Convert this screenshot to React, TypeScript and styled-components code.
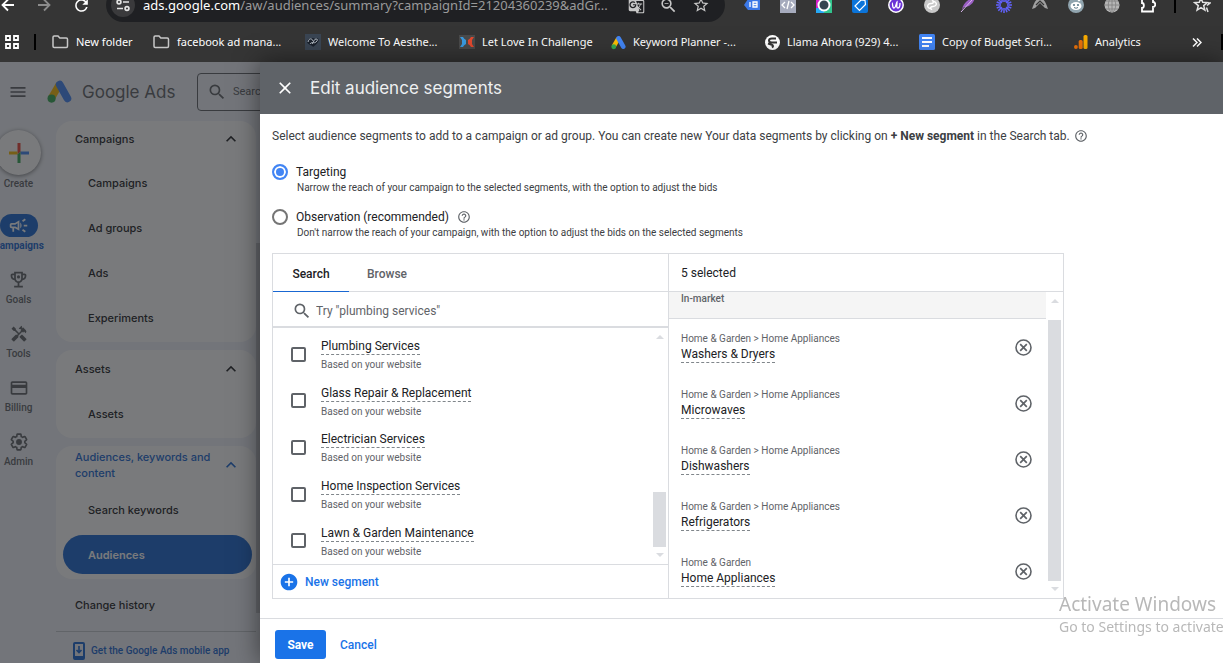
import React from "react";
import styled, { createGlobalStyle } from "styled-components";
import {
  MdMenu,
  MdSearch,
  MdClose,
  MdExpandLess,
  MdOutlineCampaign,
  MdHandyman,
  MdCreditCard,
  MdHelpOutline,
  MdAddCircle,
  MdRefresh,
  MdStarBorder,
  MdZoomOut,
  MdGTranslate,
} from "react-icons/md";

const body = `Roboto, "Liberation Sans", sans-serif`;
const display = `Inter, Roboto, sans-serif`;
const system = `"Noto Sans", "Open Sans", sans-serif`;

const GlobalStyle = createGlobalStyle`
  *, *::before, *::after { box-sizing: border-box; }
  body { margin: 0; background: #fff; overflow: hidden; font-family: ${body}; }
  button, input { font: inherit; color: inherit; }
  button { background: none; border: 0; padding: 0; cursor: pointer; }
  a { color: inherit; text-decoration: none; }
  p, h1, h2, ul { margin: 0; padding: 0; font-weight: 400; }
  ul { list-style: none; }
  svg { display: block; flex: none; }
`;

const Page = styled.div`
  display: flex;
  flex-direction: column;
  height: 100vh;
  overflow: hidden;
`;

/* ---------- browser frame ---------- */

const BrowserBar = styled.header`
  flex: none;
  height: 22px;
  display: flex;
  align-items: flex-end;
  overflow: hidden;
  background: #353535;
  color: #e3e3e3;
  font-family: ${system};
`;

const BarRow = styled.div`
  flex: 1;
  min-width: 0;
  height: 34px;
  display: flex;
  align-items: center;
`;

const NavButtons = styled.div`
  width: 106px;
  flex: none;
  display: flex;
  align-items: center;
  gap: 20px;
`;

const IconButton = styled.button<{ $color?: string }>`
  display: flex;
  align-items: center;
  justify-content: center;
  color: ${(p) => p.$color ?? "inherit"};
`;

const AddressPill = styled.div`
  flex: 1;
  min-width: 0;
  height: 34px;
  border-radius: 17px;
  background: #1f2023;
  display: flex;
  align-items: center;
  padding: 0 15px 0 5px;
  gap: 8px;
`;

const SiteInfo = styled.button`
  width: 24px;
  height: 24px;
  border-radius: 50%;
  background: #3a3a3c;
  display: grid;
  place-items: center;
  flex: none;
`;

const Address = styled.div`
  flex: 1;
  min-width: 0;
  font-size: 13px;
  line-height: 20px;
  color: #9a9a9a;
  white-space: nowrap;
  overflow: hidden;
  b {
    font-weight: 400;
    color: #fff;
  }
`;

const PillActions = styled.div`
  display: flex;
  align-items: center;
  gap: 14px;
  color: #c7c7c7;
`;

const Extensions = styled.div`
  width: 498px;
  flex: none;
  display: flex;
  align-items: center;
  padding-left: 9px;
`;

const ExtCell = styled.button`
  width: 36px;
  display: grid;
  place-items: center;
`;

const BarRule = styled.span<{ $gap?: number }>`
  width: 2px;
  height: 16px;
  margin: 0 ${(p) => p.$gap ?? 0}px;
  background: #000;
  flex: none;
`;

const BookmarkBar = styled.nav`
  flex: none;
  height: 40px;
  display: flex;
  align-items: center;
  overflow: hidden;
  background: #353535;
  color: #fff;
  font-family: ${system};
  font-size: 11px;
  line-height: 16px;
`;

const AppsButton = styled(IconButton)`
  width: 34px;
  padding-right: 10px;
`;

const BookmarkList = styled.div`
  flex: 1;
  min-width: 0;
  display: flex;
  padding-left: 16px;
  overflow: hidden;
`;

const Bookmark = styled.a<{ $width: number }>`
  width: ${(p) => p.$width}px;
  flex: none;
  display: flex;
  align-items: center;
  gap: 7px;
  white-space: nowrap;
`;

const OverflowButton = styled(IconButton)`
  width: 30px;
  margin-right: 9px;
`;

/* ---------- dimmed application ---------- */

const Workspace = styled.div`
  flex: 1;
  min-height: 0;
  display: flex;
`;

const AppPane = styled.div`
  position: relative;
  flex: 0 0 260px;
  overflow: hidden;
  display: flex;
  flex-direction: column;
  background: #f0f3f9;
  color: #3c4043;
  &::after {
    content: "";
    position: absolute;
    inset: 0;
    background: rgba(32, 33, 36, 0.6);
  }
`;

const AppHeader = styled.div`
  flex: none;
  height: 59px;
  display: flex;
  align-items: center;
  padding-left: 8px;
  color: #5f6368;
`;

const Brand = styled.a`
  display: flex;
  align-items: center;
  gap: 10px;
  width: 149px;
  padding-left: 19px;
  flex: none;
  font-family: ${display};
  font-size: 17px;
  line-height: 24px;
  white-space: nowrap;
`;

const AppSearch = styled.label`
  flex: none;
  width: 320px;
  height: 38px;
  margin-left: 20px;
  display: flex;
  align-items: center;
  gap: 6px;
  padding-left: 9px;
  border: 1px solid #5f6368;
  border-radius: 4px;
  input {
    border: 0;
    outline: 0;
    padding: 0;
    background: none;
    font-size: 11px;
  }
  input::placeholder {
    color: #5f6368;
  }
`;

const AppBody = styled.div`
  flex: 1;
  display: flex;
  min-height: 0;
`;

const Rail = styled.nav`
  width: 37px;
  flex: none;
  display: flex;
  flex-direction: column;
  align-items: center;
  padding-top: 9px;
  color: #5f6368;
  font-size: 10px;
  font-weight: 500;
  line-height: 16px;
`;

const CreateButton = styled.button`
  display: flex;
  flex-direction: column;
  align-items: center;
  height: 84px;
  span {
    width: 45px;
    height: 45px;
    border-radius: 50%;
    background: #fff;
    box-shadow: 0 1px 4px rgba(0, 0, 0, 0.5);
    display: grid;
    place-items: center;
    margin-bottom: 1px;
  }
`;

const RailLink = styled.a<{ $active?: boolean }>`
  display: flex;
  flex-direction: column;
  align-items: center;
  gap: 1px;
  height: 54px;
  color: ${(p) => (p.$active ? "#1967d2" : "inherit")};
  font-weight: ${(p) => (p.$active ? 700 : 500)};
  span {
    width: 38px;
    height: 23px;
    border-radius: 12px;
    display: grid;
    place-items: center;
    background: ${(p) => (p.$active ? "#1967d2" : "transparent")};
    color: ${(p) => (p.$active ? "#fff" : "inherit")};
  }
`;

const SideNav = styled.nav`
  width: 200px;
  flex: none;
  margin-left: 19px;
  display: flex;
  flex-direction: column;
  gap: 8px;
  font-family: ${display};
  font-size: 11px;
  font-weight: 500;
  line-height: 16px;
`;

const NavCard = styled.section`
  flex: none;
  background: #fff;
  border-radius: 16px;
  padding-bottom: 5px;
`;

const CardHeading = styled.button<{ $active?: boolean; $height?: number }>`
  width: 100%;
  height: ${(p) => p.$height ?? 38}px;
  display: flex;
  align-items: center;
  justify-content: space-between;
  padding: 0 15px 0 19px;
  text-align: left;
  color: ${(p) => (p.$active ? "#1967d2" : "#202124")};
`;

const NavLink = styled.a<{ $active?: boolean }>`
  display: flex;
  align-items: center;
  height: 39px;
  margin: 6px 4px 0 7px;
  padding-left: 25px;
  border-radius: 20px;
  background: ${(p) => (p.$active ? "#1967d2" : "transparent")};
  color: ${(p) => (p.$active ? "#fff" : "#202124")};
  font-weight: ${(p) => (p.$active ? 600 : 500)};
`;

const HistoryLink = styled.a`
  flex: none;
  padding: 10px 19px;
  color: #202124;
`;

const MobileLink = styled.a`
  flex: none;
  display: flex;
  align-items: center;
  gap: 6px;
  height: 38px;
  padding-left: 17px;
  border-top: 1px solid #c4c7cc;
  color: #1967d2;
  font-family: ${body};
  font-size: 10px;
  font-weight: 500;
  white-space: nowrap;
`;

const NavThumb = styled.span`
  width: 4px;
  height: 370px;
  margin-top: 122px;
  background: #c9cbd2;
`;

/* ---------- dialog ---------- */

const Dialog = styled.main`
  position: relative;
  flex: 1;
  min-width: 0;
  display: flex;
  flex-direction: column;
  background: #fff;
  color: #3c4043;
  box-shadow: 0 0 24px rgba(0, 0, 0, 0.5);
`;

const DialogHeader = styled.header`
  flex: none;
  height: 52px;
  display: flex;
  align-items: center;
  gap: 15px;
  padding-left: 15px;
  background: #5f6368;
  color: #fff;
  h1 {
    font-family: ${display};
    font-size: 17px;
    line-height: 24px;
    color: #eef0f1;
  }
`;

const DialogBody = styled.div`
  flex: 1;
  min-height: 0;
  padding: 14px 12px 0;
`;

const Intro = styled.p`
  display: flex;
  align-items: center;
  gap: 4px;
  margin-bottom: 20px;
  font-size: 12px;
  line-height: 16px;
  b {
    font-weight: 700;
  }
`;

const HelpIcon = styled(MdHelpOutline)`
  color: #5f6368;
`;

const Option = styled.div`
  display: grid;
  grid-template-columns: 16px auto 1fr;
  column-gap: 8px;
  align-items: center;
  align-content: start;
  height: 45px;
  font-size: 12px;
  line-height: 16px;
  & + & {
    height: 44px;
  }
  label {
    color: #202124;
  }
  p {
    grid-column: 2 / 4;
    font-size: 10px;
    padding-left: 1px;
  }
`;

const Radio = styled.input`
  appearance: none;
  width: 16px;
  height: 16px;
  margin: 0;
  border: 2px solid #757575;
  border-radius: 50%;
  &:checked {
    border-color: #4285f4;
    background: #4285f4;
    box-shadow: inset 0 0 0 2px #fff;
  }
`;

const Picker = styled.section`
  display: grid;
  grid-template-columns: 1fr 1fr;
  max-width: 792px;
  height: 346px;
  border: 1px solid #dadce0;
`;

const Column = styled.div`
  min-width: 0;
  min-height: 0;
  display: flex;
  flex-direction: column;
  & + & {
    border-left: 1px solid #dadce0;
  }
`;

const ColumnHead = styled.div`
  flex: none;
  height: 38px;
  display: flex;
  align-items: center;
  border-bottom: 1px solid #dadce0;
  font-size: 12px;
  line-height: 16px;
`;

const Tab = styled.button<{ $active?: boolean }>`
  height: 38px;
  width: 76px;
  padding-top: 3px;
  font-size: 12px;
  font-weight: 500;
  color: ${(p) => (p.$active ? "#202124" : "#5f6368")};
  border-bottom: 1px solid ${(p) => (p.$active ? "#1967d2" : "transparent")};
`;

const SelectedCount = styled.h2`
  padding-left: 12px;
  font-size: 12px;
  color: #202124;
`;

const SearchField = styled.label`
  flex: none;
  height: 36px;
  display: flex;
  align-items: center;
  gap: 4px;
  padding: 4px 0 0 19px;
  border-bottom: 2px solid #dadce0;
  color: #5f6368;
  input {
    flex: 1;
    border: 0;
    outline: 0;
    padding: 0;
    font-size: 12px;
  }
  input::placeholder {
    color: #5f6368;
  }
`;

const ScrollArea = styled.div`
  flex: 1;
  min-height: 0;
  display: flex;
`;

const SegmentList = styled.ul`
  flex: 1;
  display: flex;
  flex-direction: column;
  padding-top: 3px;
`;

const SegmentRow = styled.li`
  flex: 1;
  display: flex;
  align-items: center;
  gap: 15px;
  padding-left: 18px;
  font-size: 10px;
  line-height: 16px;
  color: #5f6368;
`;

const Checkbox = styled.input`
  appearance: none;
  width: 15px;
  height: 15px;
  margin: 0;
  border: 2px solid #5f6368;
  border-radius: 2px;
`;

const SegmentText = styled.div`
  display: flex;
  flex-direction: column;
  align-items: flex-start;
  gap: 2px;
  padding-top: 4px;
`;

const SegmentName = styled.label`
  font-size: 12px;
  line-height: 15px;
  color: #202124;
  border-bottom: 1px dashed #80868b;
`;

const Scrollbar = styled.div`
  width: 17px;
  flex: none;
  display: flex;
  flex-direction: column;
  align-items: center;
  padding: 7px 2px;
`;

const Arrow = styled.span<{ $down?: boolean }>`
  border: 4px solid transparent;
  border-top: ${(p) => (p.$down ? "4px solid #dadce0" : "0")};
  border-bottom: ${(p) => (p.$down ? "0" : "4px solid #dadce0")};
`;

const Thumb = styled.span<{ $height?: number }>`
  width: 13px;
  margin: auto 0 6px;
  background: #dadce0;
  ${(p) => (p.$height ? `height: ${p.$height}px;` : "flex: 1; margin-top: 17px;")}
`;

const NewSegment = styled.button`
  flex: none;
  height: 34px;
  width: 100%;
  display: flex;
  align-items: center;
  gap: 6px;
  padding-left: 6px;
  border-top: 1px solid #dadce0;
  font-size: 12px;
  font-weight: 500;
  color: #1a73e8;
`;

const SelectedList = styled.ul`
  flex: 1;
  min-width: 0;
`;

const GroupTitle = styled.li`
  height: 27px;
  padding-left: 12px;
  background: #f5f5f5;
  border-bottom: 1px solid #dadce0;
  font-size: 10px;
  font-weight: 500;
  line-height: 14px;
  color: #5f6368;
`;

const SelectedRow = styled.li`
  height: 56px;
  display: flex;
  align-items: center;
  justify-content: space-between;
  padding: 0 14px 0 12px;
  font-size: 10px;
  line-height: 16px;
  color: #5f6368;
`;

const SelectedName = styled.span`
  font-size: 12px;
  line-height: 15px;
  color: #202124;
  border-bottom: 1px dashed #80868b;
`;

const SelectedText = styled(SegmentText)`
  gap: 0;
  padding-top: 0;
`;

const DialogFooter = styled.footer`
  flex: none;
  height: 45px;
  display: flex;
  align-items: flex-start;
  gap: 14px;
  padding: 11px 15px 0;
  border-top: 1px solid #dadce0;
  font-size: 12px;
  font-weight: 500;
`;

const SaveButton = styled.button`
  width: 51px;
  height: 29px;
  border-radius: 3px;
  background: #1a73e8;
  color: #fff;
  font-weight: 700;
`;

const CancelButton = styled.button`
  height: 29px;
  color: #1a73e8;
`;

const Watermark = styled.aside`
  position: fixed;
  right: 0;
  bottom: 25px;
  width: 164px;
  white-space: nowrap;
  pointer-events: none;
  color: #b8b8b8;
  font-family: ${system};
  font-size: 14px;
  line-height: 22px;
  strong {
    display: block;
    font-size: 19px;
    line-height: 24px;
    font-weight: 400;
  }
`;

/* ---------- drawings ---------- */

const ArrowGlyph = ({ flip }: { flip?: boolean }) => (
  <svg width="16" height="16" viewBox="0 0 16 16" fill="none" stroke="currentColor" strokeWidth="1.8">
    <path d={flip ? "M2 8h11M8 2.500 13.500 8 8 13.500" : "M14 8H3M8 2.500 2.500 8 8 13.500"} />
  </svg>
);

const SiteControls = () => (
  <svg width="14" height="14" viewBox="0 0 14 14" fill="none" stroke="currentColor" strokeWidth="1.700">
    <circle cx="3" cy="4" r="1.900" />
    <path d="M7 4h6M1 10.500h6" />
    <circle cx="11" cy="10.500" r="1.900" />
  </svg>
);

const Folder = () => (
  <svg width="17" height="14" viewBox="0 0 17 14" fill="none" stroke="#c7c7c7" strokeWidth="1.500">
    <path d="M1 2.200q0-1.200 1.200-1.200H6l1.800 2h6.500q1.200 0 1.200 1.200v7q0 1.200-1.200 1.200H2.200Q1 12.400 1 11.200z" />
  </svg>
);

const StarList = () => (
  <svg width="18" height="18" viewBox="0 0 18 18" fill="none" stroke="currentColor" strokeWidth="1.500">
    <path d="M8 2l1.700 4.300 4.600.3-3.600 3 1.200 4.500L8 11.600l-3.900 2.500 1.200-4.500-3.600-3 4.600-.3z" />
    <path d="M14 9.500l3-2.500h-2M13.500 11.500l1.500 4.500" />
  </svg>
);

const AdsLogo = ({ size }: { size: number }) => (
  <svg width={size} height={size} viewBox="0 0 24 24">
    <path d="M4.200 18.500 11.500 5.800" stroke="#fbbc04" strokeWidth="7" />
    <path d="M12.200 5.400 19.600 18.600" stroke="#4285f4" strokeWidth="7.400" strokeLinecap="round" />
    <circle cx="4.400" cy="18.800" r="3.900" fill="#34a853" />
  </svg>
);

const CreatePlus = () => (
  <svg width="20" height="20" viewBox="0 0 20 20">
    <path d="M8.500 0h3v8.500l-3 3z" fill="#ea4335" />
    <path d="M0 8.500h8.500v3H0z" fill="#fbbc04" />
    <path d="M11.500 8.500H20v3h-8.500z" fill="#4285f4" />
    <path d="M8.500 11.500l3-3V20h-3z" fill="#34a853" />
  </svg>
);

const Trophy = () => (
  <svg width="21" height="21" viewBox="0 0 24 24" fill="currentColor">
    <path d="M19 5h-2V3H7v2H5c-1.1 0-2 .9-2 2v1c0 2.55 1.92 4.63 4.39 4.94.63 1.5 1.98 2.63 3.61 2.96V19H7v2h10v-2h-4v-3.1c1.63-.33 2.98-1.46 3.61-2.96C19.08 12.63 21 10.55 21 8V7c0-1.1-.9-2-2-2zM5 8V7h2v3.82C5.84 10.4 5 9.3 5 8zm7 6c-1.65 0-3-1.35-3-3V5h6v6c0 1.65-1.35 3-3 3zm7-6c0 1.3-.84 2.4-2 2.82V7h2v1z" />
    <circle cx="12" cy="9" r="1.8" />
  </svg>
);

const Gear = () => (
  <svg width="18" height="18" viewBox="1 1 22 22">
    <path
      d="M19.14 12.94c.04-.3.06-.61.06-.94 0-.32-.02-.64-.07-.94l2.03-1.58a.49.49 0 0 0 .12-.61l-1.92-3.32a.488.488 0 0 0-.59-.22l-2.39.96c-.5-.38-1.03-.7-1.62-.94l-.36-2.54a.484.484 0 0 0-.48-.41h-3.84c-.24 0-.43.17-.47.41l-.36 2.54c-.59.24-1.13.57-1.62.94l-2.39-.96c-.22-.08-.47 0-.59.22L2.74 8.87c-.12.21-.08.47.12.61l2.03 1.58c-.05.3-.09.63-.09.94s.02.64.07.94l-2.03 1.58a.49.49 0 0 0-.12.61l1.92 3.32c.12.22.37.29.59.22l2.39-.96c.5.38 1.03.7 1.62.94l.36 2.54c.05.24.24.41.48.41h3.84c.24 0 .44-.17.47-.41l.36-2.54c.59-.24 1.13-.56 1.62-.94l2.39.96c.22.08.47 0 .59-.22l1.92-3.32c.12-.22.07-.47-.12-.61l-2.01-1.58z"
      fill="none"
      stroke="currentColor"
      strokeWidth="2"
    />
    <circle cx="12" cy="12" r="3.600" fill="currentColor" />
  </svg>
);

const RemoveCircle = () => (
  <svg width="17" height="17" viewBox="0 0 17 17" fill="none" stroke="currentColor">
    <circle cx="8.500" cy="8.500" r="7.500" strokeWidth="1.600" />
    <path d="M5.200 5.200l6.600 6.600M11.800 5.200l-6.600 6.600" strokeWidth="1.700" />
  </svg>
);

const PhoneDownload = () => (
  <svg width="12" height="18" viewBox="0 0 12 18">
    <rect x="1" y="1" width="10" height="16" rx="1" fill="none" stroke="currentColor" strokeWidth="2" />
    <path d="M1 14h10v3H1z" fill="currentColor" />
    <path d="M6 4v6M3.500 8 6 10.500 8.500 8" fill="none" stroke="currentColor" strokeWidth="1.600" />
  </svg>
);

const AppsGrid = () => (
  <svg width="14" height="14" viewBox="0 0 14 14" fill="none" stroke="#fff" strokeWidth="1.800">
    <path d="M1 1h4v4H1zM9 1h4v4H9zM1 9h4v4H1zM9 9h4v4H9z" />
  </svg>
);

const CourseIcon = () => (
  <svg width="16" height="16" viewBox="0 0 16 16">
    <path d="M0 0h16v16H0z" fill="#3a4553" />
    <path d="M2 8c1-4 6-5 8-3 3-2 5 1 3 3-2 3-4 4-5 5-1-2-5-2-6-5z" fill="#1a212c" />
    <path d="M3 8c1-4 4-4 5-1M5 10c2-3 4 0 6-2s2-3 0-3-2 3-4 5" fill="none" stroke="#b4bcc5" />
  </svg>
);

const FunnelIcon = () => (
  <svg width="16" height="16" viewBox="0 0 16 16">
    <path d="M0 1h16v14H0z" fill="#4a4a4a" />
    <path d="M1 3h3q1 2 3 3v4q-2 1-3 3H1l2-3V6z" fill="#3a9be0" />
    <path d="M15 3h-3q-1 2-3 3v4q2 1 3 3h3l-2-3V6z" fill="#e2492f" />
  </svg>
);

const GlobeMark = () => (
  <svg width="15" height="15" viewBox="0 0 15 15">
    <circle cx="7.500" cy="7.500" r="7.500" fill="#fff" />
    <path d="M11 3.500H7Q4 3.500 4 5.500t3 2h5M3 8.500l4.500 1.500q1 1.500-.5 2.500" fill="none" stroke="#353535" strokeWidth="2" />
  </svg>
);

const DocsIcon = () => (
  <svg width="16" height="16" viewBox="0 0 16 16">
    <rect width="16" height="16" rx="1.500" fill="#4285f4" />
    <path d="M3 4h10M3 8h10M3 12h7" stroke="#fff" strokeWidth="2" />
  </svg>
);

const AnalyticsIcon = () => (
  <svg width="14" height="14" viewBox="0 0 14 14">
    <rect x="9.500" y="0" width="4" height="14" rx="1.500" fill="#f9ab00" />
    <rect x="4.700" y="5" width="4" height="9" rx="1.500" fill="#e8710a" />
    <circle cx="1.900" cy="12" r="1.900" fill="#e8710a" />
  </svg>
);

const Chevrons = () => (
  <svg width="10" height="9" viewBox="0 0 10 9" fill="none" stroke="#fff" strokeWidth="1.500">
    <path d="M1 .5l4 4-4 4M5 .5l4 4-4 4" />
  </svg>
);

const extensionArt: [string, React.ReactNode][] = [
  ["Tag helper", <><path d="M0 8l4-6h12v11H4z" fill="#3b78e7" /><path d="M6 5v5M9 5h4v5H9zM9 7.500h4" fill="none" stroke="#fff" strokeWidth="1.300" /></>],
  ["Source viewer", <><path d="M0 0h16v16H0z" fill="#a6abbd" /><path d="M5 5L2 8l3 3M11 5l3 3-3 3M9 4l-2 8" fill="none" stroke="#fff" strokeWidth="1.300" /></>],
  ["Lens", <><path d="M0 0h8v16H0z" fill="#d61cc8" /><path d="M8 0h8v16H8z" fill="#31c48d" /><path d="M0 11h8v5H0z" fill="#27a9f5" /><circle cx="8" cy="8" r="5.500" fill="#36454f" stroke="#fff" strokeWidth="2" /></>],
  ["Price tag", <><rect width="16" height="16" rx="2" fill="#0b74d9" /><path d="M3 9l6-6 4 .5.500 4-6 6z" fill="none" stroke="#fff" strokeWidth="1.200" /></>],
  ["Writer", <><circle cx="8" cy="8" r="7.200" fill="#6b34d6" stroke="#fff" strokeWidth="1.500" /><path d="M4 6c1 0 0 5 2 5s2-5 3-6c0 3-1 6 1 6s2-3 2-5" fill="none" stroke="#fff" strokeWidth="1.300" /></>],
  ["Link loop", <><circle cx="8" cy="8" r="8" fill="#c9c9c9" /><path d="M7 11c-2 1-4-1-3-3s4-1 5-2 0-3-1-2M9 5c2-1 4 1 3 3s-4 1-5 2 0 3 1 2" fill="none" stroke="#fff" strokeWidth="1.400" /></>],
  ["Feather", <><path d="M2 13C3 6 8 2 15 0c-1 6-5 10-11 10z" fill="#9a5fc4" /><path d="M1 15L12 3" stroke="#d9b8ef" /></>],
  ["Burst", <path d="M8 0v5M8 11v5M0 8h5M11 8h5M2.300 2.300l3.600 3.600M10.100 10.100l3.600 3.600M2.300 13.700l3.600-3.600M10.100 5.900l3.600-3.600M5 .7l1.500 4M9.500 11.300l1.500 4M.7 11l4-1.500M11.300 6.500l4-1.500M.7 5l4 1.500M11.300 9.500l4 1.500M11 .7L9.500 4.700M5 15.300l1.500-4" stroke="#6161fa" strokeWidth="1.500" />],
  ["Arch", <><path d="M0 12C2 5 5 1 8 1s6 4 8 11l-3-1-5-5-5 5z" fill="#a0a0a0" /><path d="M4 8l4-4 4 4" fill="none" stroke="#353535" strokeWidth="1.200" /></>],
  ["Reddit", <><circle cx="8" cy="8" r="8" fill="#90a4ae" /><ellipse cx="8" cy="9" rx="5.500" ry="4" fill="#fff" /><circle cx="6" cy="8" r="1.100" fill="#607d8b" /><circle cx="10" cy="8" r="1.100" fill="#607d8b" /><circle cx="11" cy="3" r="1.300" fill="#fff" /><path d="M6 10.500q2 1.500 4 0" fill="none" stroke="#607d8b" /></>],
  ["Globe", <><circle cx="8" cy="8" r="7.500" fill="#b5b5b5" /><path d="M8 0v16M0 8h16M2 4h12M2 12h12M8 0C3 4 3 12 8 16M8 0c5 4 5 12 0 16" fill="none" stroke="#7d7d7d" strokeWidth=".8" /></>],
  ["Extensions", <path d="M2 1h11v4c3 0 3 5 0 5v4.500H2V11c2.500 0 2.500-5 0-5z" fill="none" stroke="#fff" strokeWidth="1.800" />],
];

const bookmarks: { label: string; icon: React.ReactNode; width: number }[] = [
  { label: "New folder", icon: <Folder />, width: 101 },
  { label: "facebook ad mana...", icon: <Folder />, width: 152 },
  { label: "Welcome To Aesthe...", icon: <CourseIcon />, width: 154 },
  { label: "Let Love In Challenge", icon: <FunnelIcon />, width: 152 },
  { label: "Keyword Planner -...", icon: <AdsLogo size={15} />, width: 154 },
  { label: "Llama Ahora (929) 4...", icon: <GlobeMark />, width: 154 },
  { label: "Copy of Budget Scri...", icon: <DocsIcon />, width: 155 },
  { label: "Analytics", icon: <AnalyticsIcon />, width: 80 },
];

const railItems: { label: string; icon: React.ReactNode; active?: boolean }[] = [
  { label: "Campaigns", icon: <MdOutlineCampaign size={21} />, active: true },
  { label: "Goals", icon: <Trophy /> },
  { label: "Tools", icon: <MdHandyman size={18} /> },
  { label: "Billing", icon: <MdCreditCard size={20} /> },
  { label: "Admin", icon: <Gear /> },
];

const suggestions = [
  "Plumbing Services",
  "Glass Repair & Replacement",
  "Electrician Services",
  "Home Inspection Services",
  "Lawn & Garden Maintenance",
];

const selected = [
  { path: "Home & Garden > Home Appliances", name: "Washers & Dryers" },
  { path: "Home & Garden > Home Appliances", name: "Microwaves" },
  { path: "Home & Garden > Home Appliances", name: "Dishwashers" },
  { path: "Home & Garden > Home Appliances", name: "Refrigerators" },
  { path: "Home & Garden", name: "Home Appliances" },
];

export default function App() {
  return (
    <Page>
      <GlobalStyle />
      <BrowserBar>
        <BarRow>
          <NavButtons>
            <IconButton aria-label="Back" $color="#fff"><ArrowGlyph /></IconButton>
            <IconButton aria-label="Forward" $color="#8c8c8c"><ArrowGlyph flip /></IconButton>
            <IconButton aria-label="Reload" $color="#fff"><MdRefresh size={19} /></IconButton>
          </NavButtons>
          <AddressPill>
            <SiteInfo aria-label="Site information"><SiteControls /></SiteInfo>
            <Address><b>ads.google.com</b>/aw/audiences/summary?campaignId=21204360239&amp;adGr...</Address>
            <PillActions>
              <IconButton aria-label="Translate"><MdGTranslate size={17} /></IconButton>
              <IconButton aria-label="Zoom"><MdZoomOut size={19} /></IconButton>
              <IconButton aria-label="Bookmark this page"><MdStarBorder size={18} /></IconButton>
            </PillActions>
          </AddressPill>
          <Extensions>
            {extensionArt.map(([name, art]) => (
              <ExtCell key={name} aria-label={name}>
                <svg width="16" height="16" viewBox="0 0 16 16">{art}</svg>
              </ExtCell>
            ))}
            <BarRule $gap={8} />
            <ExtCell aria-label="Bookmarks"><StarList /></ExtCell>
          </Extensions>
        </BarRow>
      </BrowserBar>

      <BookmarkBar aria-label="Bookmarks">
        <AppsButton aria-label="Apps"><AppsGrid /></AppsButton>
        <BarRule />
        <BookmarkList>
          {bookmarks.map((b) => (
            <Bookmark key={b.label} href="#" $width={b.width}>{b.icon}{b.label}</Bookmark>
          ))}
        </BookmarkList>
        <OverflowButton aria-label="More bookmarks"><Chevrons /></OverflowButton>
        <BarRule />
      </BookmarkBar>

      <Workspace>
        <AppPane>
          <AppHeader>
            <IconButton aria-label="Menu"><MdMenu size={20} /></IconButton>
            <Brand href="#"><AdsLogo size={25} />Google Ads</Brand>
            <AppSearch>
              <MdSearch size={20} />
              <input type="search" aria-label="Search" placeholder="Search" />
            </AppSearch>
          </AppHeader>
          <AppBody>
            <Rail>
              <CreateButton><span><CreatePlus /></span>Create</CreateButton>
              {railItems.map((r) => (
                <RailLink key={r.label} href="#" $active={r.active}><span>{r.icon}</span>{r.label}</RailLink>
              ))}
            </Rail>
            <SideNav>
              <NavCard>
                <CardHeading $height={36}>Campaigns<MdExpandLess size={20} /></CardHeading>
                <NavLink href="#">Campaigns</NavLink>
                <NavLink href="#">Ad groups</NavLink>
                <NavLink href="#">Ads</NavLink>
                <NavLink href="#">Experiments</NavLink>
              </NavCard>
              <NavCard>
                <CardHeading>Assets<MdExpandLess size={20} /></CardHeading>
                <NavLink href="#">Assets</NavLink>
              </NavCard>
              <NavCard>
                <CardHeading $active>Audiences, keywords and content<MdExpandLess size={20} /></CardHeading>
                <NavLink href="#">Search keywords</NavLink>
                <NavLink href="#" $active>Audiences</NavLink>
              </NavCard>
              <HistoryLink href="#">Change history</HistoryLink>
              <MobileLink href="#"><PhoneDownload />Get the Google Ads mobile app</MobileLink>
            </SideNav>
            <NavThumb />
          </AppBody>
        </AppPane>

        <Dialog>
          <DialogHeader>
            <IconButton aria-label="Close"><MdClose size={20} /></IconButton>
            <h1>Edit audience segments</h1>
          </DialogHeader>
          <DialogBody>
            <Intro>
              <span>
                Select audience segments to add to a campaign or ad group. You can create new Your data segments by clicking on <b>+ New segment</b> in the Search tab.
              </span>
              <HelpIcon size={14} />
            </Intro>
            <Option>
              <Radio type="radio" name="mode" id="targeting" defaultChecked />
              <label htmlFor="targeting">Targeting</label>
              <span />
              <p>Narrow the reach of your campaign to the selected segments, with the option to adjust the bids</p>
            </Option>
            <Option>
              <Radio type="radio" name="mode" id="observation" />
              <label htmlFor="observation">Observation (recommended)</label>
              <HelpIcon size={14} />
              <p>Don't narrow the reach of your campaign, with the option to adjust the bids on the selected segments</p>
            </Option>

            <Picker>
              <Column>
                <ColumnHead role="tablist">
                  <Tab role="tab" aria-selected $active>Search</Tab>
                  <Tab role="tab">Browse</Tab>
                </ColumnHead>
                <SearchField>
                  <MdSearch size={20} />
                  <input type="text" aria-label="Search segments" placeholder={'Try "plumbing services"'} />
                </SearchField>
                <ScrollArea>
                  <SegmentList>
                    {suggestions.map((s, i) => (
                      <SegmentRow key={s}>
                        <Checkbox type="checkbox" id={`segment-${i}`} />
                        <SegmentText>
                          <SegmentName htmlFor={`segment-${i}`}>{s}</SegmentName>
                          <span>Based on your website</span>
                        </SegmentText>
                      </SegmentRow>
                    ))}
                  </SegmentList>
                  <Scrollbar>
                    <Arrow />
                    <Thumb $height={55} />
                    <Arrow $down />
                  </Scrollbar>
                </ScrollArea>
                <NewSegment><MdAddCircle size={20} />New segment</NewSegment>
              </Column>
              <Column>
                <ColumnHead><SelectedCount>5 selected</SelectedCount></ColumnHead>
                <ScrollArea>
                  <SelectedList>
                    <GroupTitle>In-market</GroupTitle>
                    {selected.map((s) => (
                      <SelectedRow key={s.name}>
                        <SelectedText>
                          <span>{s.path}</span>
                          <SelectedName>{s.name}</SelectedName>
                        </SelectedText>
                        <IconButton aria-label={`Remove ${s.name}`}><RemoveCircle /></IconButton>
                      </SelectedRow>
                    ))}
                  </SelectedList>
                  <Scrollbar>
                    <Arrow />
                    <Thumb />
                    <Arrow $down />
                  </Scrollbar>
                </ScrollArea>
              </Column>
            </Picker>
          </DialogBody>
          <DialogFooter>
            <SaveButton>Save</SaveButton>
            <CancelButton>Cancel</CancelButton>
          </DialogFooter>
        </Dialog>
      </Workspace>

      <Watermark>
        <strong>Activate Windows</strong>
        Go to Settings to activate
      </Watermark>
    </Page>
  );
}
